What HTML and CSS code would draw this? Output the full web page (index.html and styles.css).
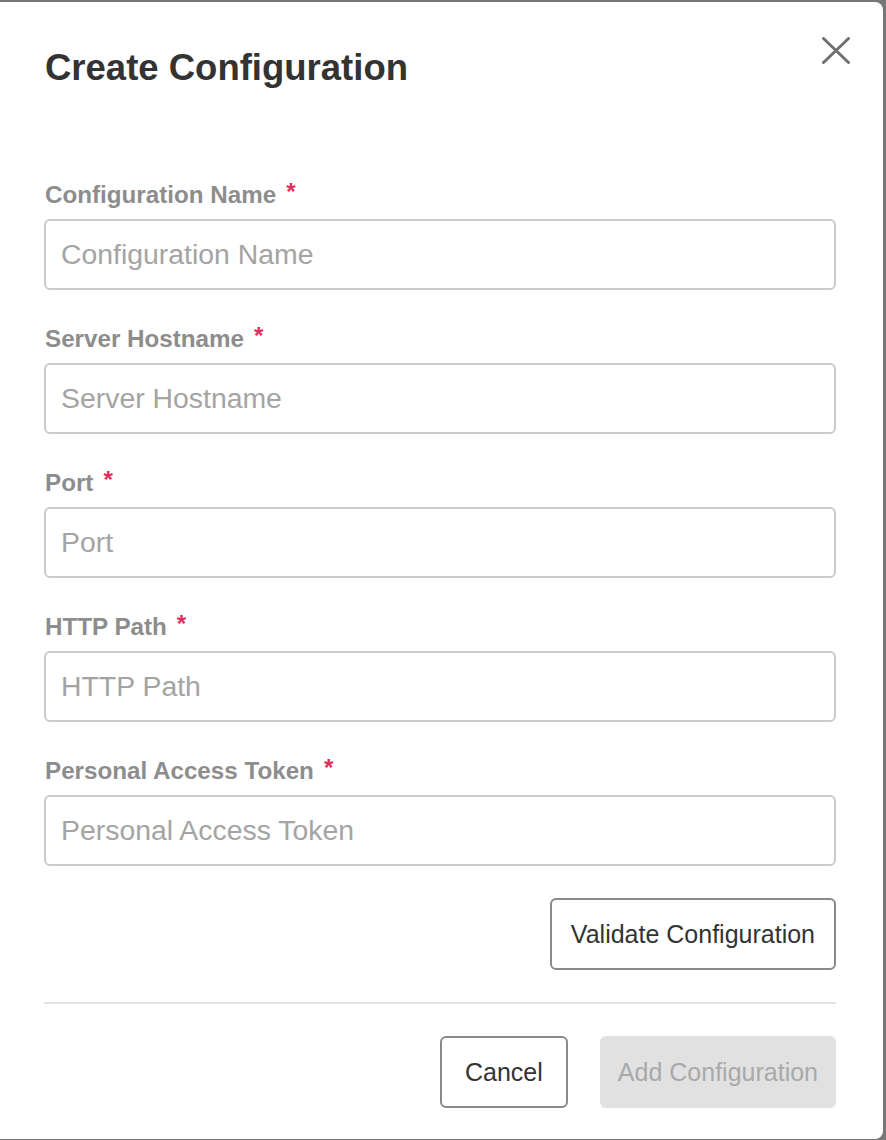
FILE: index.html
```html
<!DOCTYPE html>
<html>
<head>
    <meta charset="utf-8">
    <title>Create Configuration</title>
    <link rel="stylesheet" href="styles.css">
</head>
<body>
    <div class="modal">
        <div class="modal-header">
            <h1>Create Configuration</h1>
            <button class="close-btn" aria-label="Close">
                <svg width="28" height="27" viewBox="0 0 28 27">
                    <path d="M1.5 1.5 L26.5 25.5 M26.5 1.5 L1.5 25.5" stroke="#707070" stroke-width="3" stroke-linecap="round" fill="none"/>
                </svg>
            </button>
        </div>

        <form class="config-form" onsubmit="return false">
            <div class="field">
                <label for="configName">Configuration Name<span class="req">*</span></label>
                <input type="text" id="configName" placeholder="Configuration Name">
            </div>
            <div class="field">
                <label for="hostname">Server Hostname<span class="req">*</span></label>
                <input type="text" id="hostname" placeholder="Server Hostname">
            </div>
            <div class="field">
                <label for="port">Port<span class="req">*</span></label>
                <input type="text" id="port" placeholder="Port">
            </div>
            <div class="field">
                <label for="httpPath">HTTP Path<span class="req">*</span></label>
                <input type="text" id="httpPath" placeholder="HTTP Path">
            </div>
            <div class="field">
                <label for="token">Personal Access Token<span class="req">*</span></label>
                <input type="text" id="token" placeholder="Personal Access Token">
            </div>

            <div class="validate-row">
                <button type="button" class="btn btn-outline">Validate Configuration</button>
            </div>
        </form>

        <hr class="divider">

        <div class="modal-footer">
            <button type="button" class="btn btn-outline btn-cancel">Cancel</button>
            <button type="button" class="btn btn-disabled" disabled>Add Configuration</button>
        </div>
    </div>
</body>
</html>
```

FILE: styles.css
```css
html, body {
    margin: 0;
    height: 100%;
}
body {
    font-family: "Liberation Sans", Arial, sans-serif;
    background-color: #777;
    padding: 2px 3px 1px 0;
    box-sizing: border-box;
    display: flex;
    flex-direction: column;
}
.modal {
    flex: 1;
    background-color: #fff;
    border-radius: 0 8px 8px 0;
    padding: 44px 47px 30px 44px;
}
.modal-header {
    display: flex;
    justify-content: space-between;
    align-items: flex-start;
}
h1 {
    margin: 0 0 0 1px;
    font-size: 36.5px;
    line-height: 44px;
    font-weight: bold;
    color: #333;
}
.close-btn {
    background: none;
    border: none;
    padding: 0;
    margin: -9px -14px 0 0;
    width: 28px;
    height: 27px;
    cursor: pointer;
}
.close-btn svg {
    display: block;
}
.config-form {
    margin-top: 91px;
    display: flex;
    flex-direction: column;
    gap: 35px;
}
.field {
    display: flex;
    flex-direction: column;
    gap: 10px;
}
.field label {
    height: 28px;
    font-size: 24.2px;
    line-height: 28px;
    font-weight: bold;
    color: #8d8d8d;
    margin-left: 1px;
}
.req {
    color: #de2f5d;
    margin-left: 10px;
    vertical-align: 3px;
    line-height: 0;
}
.field input {
    box-sizing: border-box;
    height: 71px;
    width: 100%;
    border: 2px solid #cbcbcb;
    border-radius: 6px;
    padding: 0 15px;
    font-family: inherit;
    font-size: 28.4px;
    color: #333;
    outline: none;
}
.field input::placeholder {
    color: #a4a4a4;
}
.validate-row {
    display: flex;
    justify-content: flex-end;
    margin-top: -3px;
}
.btn {
    box-sizing: border-box;
    height: 72px;
    padding: 0 19px;
    border-radius: 6px;
    font-family: inherit;
    font-size: 25px;
    color: #333;
    background: #fff;
    cursor: pointer;
}
.btn-outline {
    border: 2px solid #8a8a8a;
}
.btn-cancel {
    width: 128px;
}
.btn-disabled {
    border: none;
    padding: 0 18px;
    background-color: #e1e1e1;
    color: #a9a9a9;
    cursor: default;
}
.divider {
    border: none;
    border-top: 2px solid #e3e3e3;
    margin: 32px 0 0 0;
}
.modal-footer {
    display: flex;
    justify-content: flex-end;
    gap: 32px;
    margin-top: 32px;
}
```
